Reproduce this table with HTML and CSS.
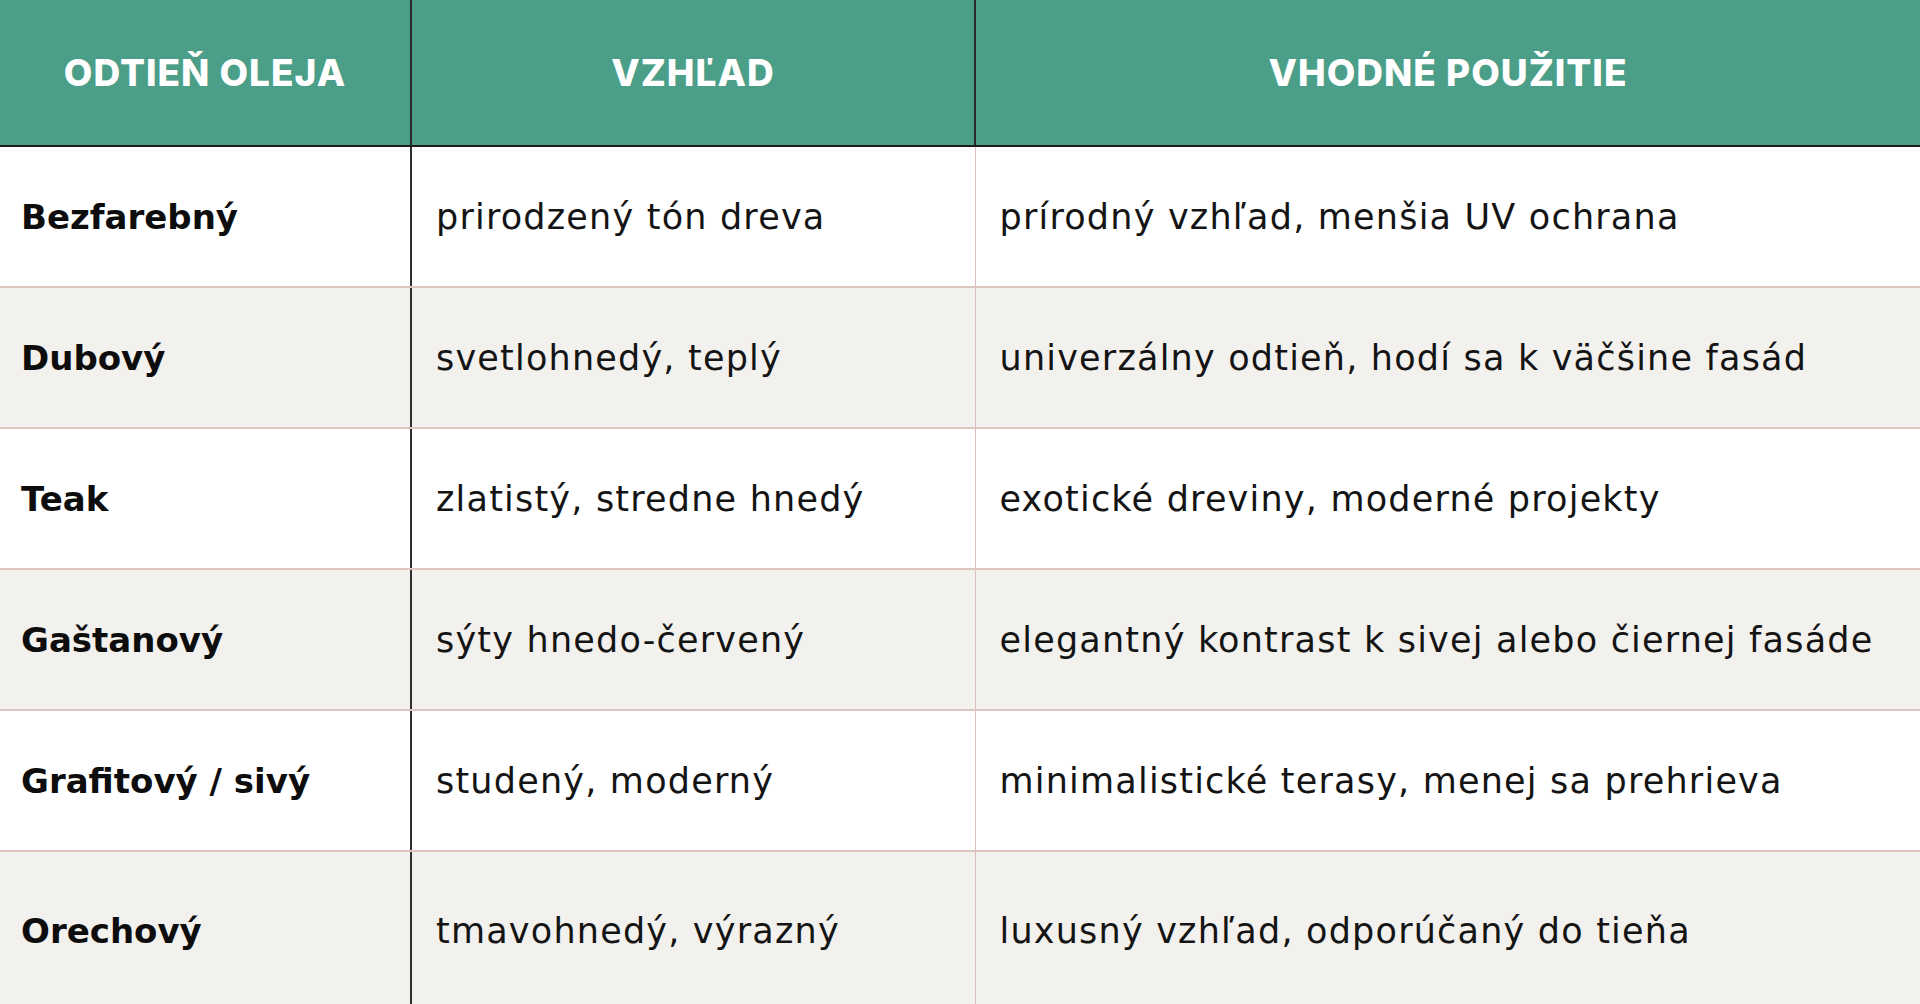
FILE: index.html
```html
<!DOCTYPE html>
<html lang="sk">
<head>
<meta charset="utf-8">
<title>Odtiene oleja</title>
<link rel="stylesheet" href="styles.css">
</head>
<body>
<table class="oil-table">
  <colgroup>
    <col class="c1">
    <col class="c2">
    <col class="c3">
  </colgroup>
  <thead>
    <tr>
      <th class="h1">ODTIEŇ OLEJA</th>
      <th class="h2">VZHĽAD</th>
      <th class="h3">VHODNÉ POUŽITIE</th>
    </tr>
  </thead>
  <tbody>
    <tr>
      <td class="name">Bezfarebný</td>
      <td class="look">prirodzený tón dreva</td>
      <td class="use">prírodný vzhľad, menšia UV ochrana</td>
    </tr>
    <tr class="alt">
      <td class="name">Dubový</td>
      <td class="look">svetlohnedý, teplý</td>
      <td class="use">univerzálny odtieň, hodí sa k väčšine fasád</td>
    </tr>
    <tr>
      <td class="name">Teak</td>
      <td class="look">zlatistý, stredne hnedý</td>
      <td class="use">exotické dreviny, moderné projekty</td>
    </tr>
    <tr class="alt">
      <td class="name">Gaštanový</td>
      <td class="look">sýty hnedo-červený</td>
      <td class="use">elegantný kontrast k sivej alebo čiernej fasáde</td>
    </tr>
    <tr>
      <td class="name">Grafitový / sivý</td>
      <td class="look">studený, moderný</td>
      <td class="use">minimalistické terasy, menej sa prehrieva</td>
    </tr>
    <tr class="alt last">
      <td class="name">Orechový</td>
      <td class="look">tmavohnedý, výrazný</td>
      <td class="use">luxusný vzhľad, odporúčaný do tieňa</td>
    </tr>
  </tbody>
</table>
</body>
</html>
```

FILE: styles.css
```css
html, body {
  margin: 0;
  padding: 0;
  background: #ffffff;
  overflow: hidden;
}

body {
  width: 1920px;
  height: 1004px;
  font-family: "DejaVu Sans", "Inter", sans-serif;
  color: #111111;
}

.oil-table {
  width: 1920px;
  border-collapse: collapse;
  table-layout: fixed;
}

.c1 { width: 411px; }
.c2 { width: 564px; }
.c3 { width: 945px; }

.oil-table th {
  height: 145px;
  padding: 0;
  background: #4b9e87;
  color: #ffffff;
  font-family: "Inter", "DejaVu Sans", sans-serif;
  font-size: 37px;
  font-weight: 800;
  letter-spacing: 1px;
  text-align: center;
  vertical-align: middle;
  border-bottom: 2px solid #1c1c1c;
}

.oil-table th.h1,
.oil-table th.h2 {
  border-right: 2px solid #2a2a2a;
}

.oil-table td {
  height: 139px;
  padding: 0 0 0 24px;
  font-size: 35px;
  font-weight: 400;
  letter-spacing: 1.2px;
  vertical-align: middle;
  white-space: nowrap;
  border-bottom: 2px solid #dcc6bf;
  background: #ffffff;
  color: #141414;
}

.oil-table tr.alt td {
  background: #f3f1ee;
}

.oil-table tr.last td {
  height: 158px;
}

.oil-table td.name {
  padding-left: 21px;
  font-size: 34px;
  font-weight: 700;
  letter-spacing: 0;
  color: #0d0d0d;
  border-right: 2px solid #2e2e2e;
}

.oil-table td.look {
  border-right: 1px solid #d9bfb7;
}
```
